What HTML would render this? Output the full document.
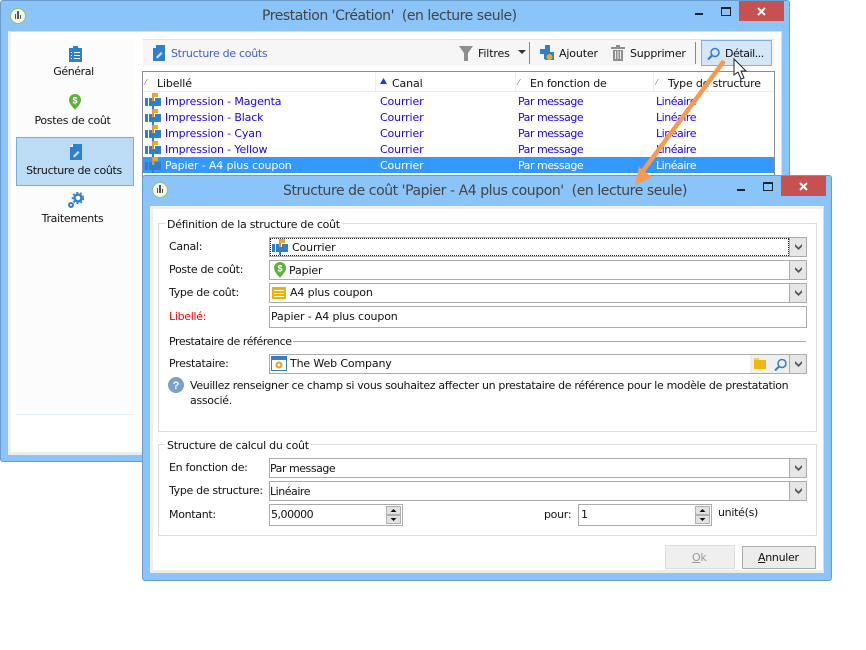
<!DOCTYPE html>
<html><head><meta charset="utf-8">
<style>
html,body{margin:0;padding:0;background:#fff;}
#p{position:relative;width:866px;height:650px;overflow:hidden;background:#fff;font-family:"DejaVu Sans","Liberation Sans",sans-serif;font-size:11px;color:#111;}
#p div,#p svg{position:absolute;}
.t{white-space:nowrap;line-height:16px;margin-top:1px;letter-spacing:-.3px;}
.n{letter-spacing:-.14px;}
.m{letter-spacing:-.47px;}
.win{background:#8ac4f9;border:1px solid #6a9ccb;box-sizing:border-box;border-radius:3px;}
.f{background:#fff;border:1px solid #ababab;box-sizing:border-box;}
.dd{background:#e6e6e6;border:1px solid #ababab;box-sizing:border-box;width:18px;}
.cap{color:#444;font-size:14px;letter-spacing:-.47px;}
.bl{color:#1a00ff;}
.sp{background:#e2e2e2;border:1px solid #b0b0b0;box-sizing:border-box;width:15px;height:9px;}
</style></head><body><div id="p">
<svg width="0" height="0" style="position:absolute"><defs>
<g id="mail"><rect x="0" y="5" width="3" height="8" fill="#2f80c8"/><path d="M4 5h4v3h2V5h6v8H4z" fill="#2f80c8"/><rect x="7" y="0" width="2" height="8" fill="#e8902a"/><rect x="8" y="0" width="5" height="4" fill="#f5a623"/><rect x="7" y="13" width="2" height="3" fill="#2f80c8"/></g>
<g id="doc"><path d="M3 0h9v16H0V3z" fill="#2f80c8"/><path d="M3 0v3H0z" fill="#fff"/><path d="M3 12l5-5 1.500 1.500-5 5z" fill="#cfe4f6"/></g>
<g id="pin"><path d="M6 0a6 6 0 0 1 6 6c0 4-4 7-6 10-2-3-6-6-6-10a6 6 0 0 1 6-6z" fill="#5fb03c"/><text x="6" y="9.500" font-size="9" font-weight="bold" text-anchor="middle" fill="#fff" font-family="Liberation Sans">$</text></g>
<g id="chev"><path d="M1 0l3.500 3.500L8 0v2.500L4.500 6 1 2.500z" fill="#555"/></g>
<g id="logo"><circle cx="8" cy="8" r="7.500" fill="#f4f4ee" stroke="#9cc35a"/><path d="M7 3v8h2V3zM5 6v5h1V6zM10 7v4h1V7z" fill="#555"/></g>
<g id="mag"><circle cx="8" cy="5.500" r="4" fill="none" stroke="#2f80c8" stroke-width="1.500"/><path d="M5 8.500L1 12.500" stroke="#2f80c8" stroke-width="2"/></g>
</defs></svg>

<!-- main window -->
<div class="win" style="left:0;top:0;width:790px;height:462px"></div>
<div style="left:8px;top:31px;width:774px;height:424px;background:#fff;border:1px solid #ddd;box-sizing:border-box;border-bottom:3px solid #ececec;border-left:3px solid #f0f0f0"></div>
<svg style="left:10px;top:8px" width="16" height="16"><use href="#logo"/></svg>
<div class="t cap" style="left:262px;top:7px">Prestation 'Création'&nbsp; (en lecture seule)</div>
<div style="left:695px;top:13px;width:8px;height:2px;background:#222"></div>
<div style="left:721px;top:7px;width:8px;height:6px;border:1px solid #222;border-top-width:2px"></div>
<div style="left:739px;top:1px;width:45px;height:20px;background:#c75050"></div>
<svg style="left:757px;top:7px" width="9" height="9"><path d="M1 1l7 7M8 1L1 8" stroke="#fff" stroke-width="2"/></svg>

<!-- sidebar -->
<div style="left:16px;top:39px;width:118px;height:375px;background:#fcfcfc;border-bottom:1px solid #e6eefb"></div>
<div style="left:16px;top:137px;width:118px;height:49px;background:#bcdcf6;border:1px solid #74ade0;box-sizing:border-box"></div>
<svg style="left:69px;top:45px" width="13" height="17"><path d="M0 3h4V1h5v2h4v14H0z" fill="#2f80c8"/><path d="M5 7.500h6M5 10.500h6M5 13.500h6M2 7.500h1M2 10.500h1M2 13.500h1" stroke="#fff"/></svg>
<div class="t" style="left:16px;top:63px;width:115px;text-align:center;letter-spacing:-.4px">Général</div>
<svg style="left:69px;top:94px" width="12" height="17"><use href="#pin"/></svg>
<div class="t" style="left:16px;top:112px;width:113px;text-align:center">Postes de coût</div>
<svg style="left:70px;top:144px" width="12" height="16"><use href="#doc"/></svg>
<div class="t" style="left:16px;top:162px;width:116px;text-align:center;letter-spacing:-.33px">Structure de coûts</div>
<svg style="left:67px;top:192px" width="17" height="17"><circle cx="11" cy="6" r="3.500" fill="none" stroke="#2f80c8" stroke-width="2.500"/><circle cx="11" cy="6" r="5.500" fill="none" stroke="#2f80c8" stroke-width="1.500" stroke-dasharray="2 2"/><circle cx="4" cy="13" r="2" fill="none" stroke="#2f80c8" stroke-width="2"/></svg>
<div class="t" style="left:16px;top:210px;width:113px;text-align:center">Traitements</div>

<!-- toolbar -->
<div style="left:143px;top:39px;width:632px;height:27px;background:#f6f6f6;border-top:1px solid #e4e4e4;box-sizing:border-box"></div>
<svg style="left:153px;top:45px" width="12" height="16"><use href="#doc"/></svg>
<div class="t" style="left:171px;top:45px;color:#3f5fcc">Structure de coûts</div>
<svg style="left:459px;top:46px" width="15" height="15"><path d="M0 0h14L9 7v8H5V7z" fill="#8e8e8e"/></svg>
<div class="t n" style="left:478px;top:45px">Filtres</div>
<svg style="left:518px;top:50px" width="8" height="5"><path d="M0 0h8L4 4z" fill="#333"/></svg>
<div style="left:529px;top:42px;width:1px;height:22px;background:#888"></div>
<svg style="left:540px;top:45px" width="15" height="16"><path d="M5 0h5v7h4v8H6l-2-1V9H0V4h5z" fill="#2f80c8"/><circle cx="9.500" cy="12" r="3" fill="#f5a623"/></svg>
<div class="t n" style="left:559px;top:45px">Ajouter</div>
<svg style="left:611px;top:45px" width="14" height="16"><path d="M0 2h14v2H0zM5 0h4v2H5zM2 5h10v11H2z" fill="#8e8e8e"/><path d="M4.500 6v8M7 6v8M9.500 6v8" stroke="#eee"/></svg>
<div class="t n" style="left:630px;top:45px;letter-spacing:-.2px">Supprimer</div>
<div style="left:695px;top:42px;width:1px;height:22px;background:#888"></div>
<div style="left:701px;top:40px;width:71px;height:26px;background:#d4e6f8;border:1px solid #7eb0e2;box-sizing:border-box"></div>
<svg style="left:707px;top:47px" width="13" height="14"><use href="#mag"/></svg>
<div class="t" style="left:725px;top:45px;letter-spacing:-.45px">Détail...</div>

<!-- list -->
<div style="left:142px;top:71px;width:633px;height:110px;background:#fff;border:1px solid #8a8a95;box-sizing:border-box"></div>
<div style="left:143px;top:72px;width:631px;height:20px;background:#fff;border-bottom:1px solid #e3effb;box-sizing:border-box"></div>
<div style="left:375px;top:72px;width:1px;height:20px;background:#e3effb"></div>
<div style="left:515px;top:72px;width:1px;height:20px;background:#e3effb"></div>
<div style="left:653px;top:72px;width:1px;height:20px;background:#e3effb"></div>
<div class="t" style="left:145px;top:74px;font-size:8px;color:#777">⁄</div>
<div class="t n" style="left:157px;top:75px">Libellé</div>
<svg style="left:380px;top:78px" width="7" height="6"><path d="M0 6L3.500 0 7 6z" fill="#1a3fd0"/></svg>
<div class="t n" style="left:392px;top:75px">Canal</div>
<div class="t" style="left:518px;top:74px;font-size:8px;color:#777">⁄</div>
<div class="t" style="left:530px;top:75px;letter-spacing:-.2px">En fonction de</div>
<div class="t" style="left:656px;top:74px;font-size:8px;color:#777">⁄</div>
<div class="t" style="left:668px;top:75px;letter-spacing:-.18px">Type de structure</div>

<div style="left:143px;top:157px;width:631px;height:16px;background:#3399ff"></div>
<svg style="left:145px;top:93px" width="17" height="16"><use href="#mail"/></svg>
<svg style="left:145px;top:109px" width="17" height="16"><use href="#mail"/></svg>
<svg style="left:145px;top:125px" width="17" height="16"><use href="#mail"/></svg>
<svg style="left:145px;top:141px" width="17" height="16"><use href="#mail"/></svg>
<svg style="left:145px;top:157px" width="17" height="16"><use href="#mail"/></svg>

<div class="t bl n" style="left:165px;top:93px">Impression - Magenta</div>
<div class="t bl n" style="left:380px;top:93px">Courrier</div><div class="t bl m" style="left:518px;top:93px">Par message</div><div class="t bl m" style="left:656px;top:93px">Linéaire</div>
<div class="t bl n" style="left:165px;top:109px">Impression - Black</div>
<div class="t bl n" style="left:380px;top:109px">Courrier</div><div class="t bl m" style="left:518px;top:109px">Par message</div><div class="t bl m" style="left:656px;top:109px">Linéaire</div>
<div class="t bl n" style="left:165px;top:125px">Impression - Cyan</div>
<div class="t bl n" style="left:380px;top:125px">Courrier</div><div class="t bl m" style="left:518px;top:125px">Par message</div><div class="t bl m" style="left:656px;top:125px">Linéaire</div>
<div class="t bl n" style="left:165px;top:141px">Impression - Yellow</div>
<div class="t bl n" style="left:380px;top:141px">Courrier</div><div class="t bl m" style="left:518px;top:141px">Par message</div><div class="t bl m" style="left:656px;top:141px">Linéaire</div>
<div class="t n" style="left:165px;top:157px;color:#fff">Papier - A4 plus coupon</div>
<div class="t n" style="left:380px;top:157px;color:#fff">Courrier</div><div class="t m" style="left:518px;top:157px;color:#fff">Par message</div><div class="t m" style="left:656px;top:157px;color:#fff">Linéaire</div>

<!-- dialog -->
<div class="win" style="left:142px;top:175px;width:690px;height:406px"></div>
<div style="left:150px;top:206px;width:674px;height:367px;background:#fff;border:1px solid #ddd;border-left:3px solid #f0f0f0;border-top:3px solid #f0f0f0;border-bottom:3px solid #ececec;box-sizing:border-box"></div>
<svg style="left:152px;top:182px" width="16" height="16"><use href="#logo"/></svg>
<div class="t cap" style="left:283px;top:182px;letter-spacing:-.44px">Structure de coût 'Papier - A4 plus coupon'&nbsp; (en lecture seule)</div>
<div style="left:737px;top:189px;width:8px;height:2px;background:#222"></div>
<div style="left:763px;top:182px;width:8px;height:6px;border:1px solid #222;border-top-width:2px"></div>
<div style="left:781px;top:176px;width:45px;height:20px;background:#c75050"></div>
<svg style="left:799px;top:182px" width="9" height="9"><path d="M1 1l7 7M8 1L1 8" stroke="#fff" stroke-width="2"/></svg>

<!-- group 1 -->
<div style="left:158px;top:223px;width:659px;height:209px;border:1px solid #ddd;box-sizing:border-box"></div>
<div class="t" style="left:165px;top:216px;background:#fff;padding:0 2px;letter-spacing:-.27px">Définition de la structure de coût</div>
<div class="t" style="left:169px;top:238px">Canal:</div>
<div class="t" style="left:169px;top:261px">Poste de coût:</div>
<div class="t" style="left:169px;top:284px">Type de coût:</div>
<div class="t" style="left:169px;top:308px;color:#f00">Libellé:</div>

<div class="f" style="left:269px;top:237px;width:538px;height:20px"></div>
<div style="left:270px;top:238px;width:519px;height:18px;border:1px dotted #222;box-sizing:border-box"></div>
<div class="dd" style="left:789px;top:237px;height:20px"></div><svg style="left:794px;top:244px" width="9" height="7"><use href="#chev"/></svg>
<svg style="left:272px;top:239px" width="17" height="16"><use href="#mail"/></svg>
<div class="t n" style="left:292px;top:239px">Courrier</div>

<div class="f" style="left:269px;top:260px;width:538px;height:20px"></div>
<div class="dd" style="left:789px;top:260px;height:20px"></div><svg style="left:794px;top:267px" width="9" height="7"><use href="#chev"/></svg>
<svg style="left:274px;top:262px" width="12" height="16"><use href="#pin"/></svg>
<div class="t n" style="left:289px;top:262px">Papier</div>

<div class="f" style="left:269px;top:283px;width:538px;height:20px"></div>
<div class="dd" style="left:789px;top:283px;height:20px"></div><svg style="left:794px;top:290px" width="9" height="7"><use href="#chev"/></svg>
<svg style="left:272px;top:287px" width="14" height="12"><rect width="14" height="12" fill="#e8b010"/><path d="M2 3.500h10M2 6.500h10M2 9.500h10" stroke="#fff3c8"/></svg>
<div class="t n" style="left:290px;top:284px">A4 plus coupon</div>

<div class="f" style="left:269px;top:306px;width:538px;height:22px"></div>
<div class="t n" style="left:271px;top:308px">Papier - A4 plus coupon</div>

<div class="t" style="left:169px;top:333px;letter-spacing:-.42px">Prestataire de référence</div>
<div style="left:293px;top:341px;width:513px;height:1px;background:#a8a8a8"></div>

<div class="t" style="left:169px;top:355px">Prestataire:</div>
<div class="f" style="left:269px;top:354px;width:538px;height:20px"></div>
<div style="left:750px;top:355px;width:39px;height:18px;background:#efefef"></div>
<div class="dd" style="left:789px;top:354px;height:20px"></div><svg style="left:794px;top:361px" width="9" height="7"><use href="#chev"/></svg>
<svg style="left:271px;top:356px" width="16" height="15"><rect x=".5" y=".5" width="15" height="14" fill="#fff" stroke="#2f80c8"/><rect x="1" y="1" width="14" height="3" fill="#2f80c8"/><circle cx="8" cy="9" r="2.500" fill="none" stroke="#f09a20" stroke-width="2"/></svg>
<div class="t n" style="left:290px;top:355px">The Web Company</div>
<svg style="left:754px;top:358px" width="12" height="11"><path d="M0 0h5v2h7v9H0z" fill="#efb810"/><path d="M0 0h5v2H0z" fill="#f5d060"/></svg>
<svg style="left:774px;top:358px" width="13" height="13"><use href="#mag"/></svg>

<svg style="left:168px;top:377px" width="16" height="16"><circle cx="8" cy="8" r="8" fill="#7b9fcf"/><text x="8" y="12" font-size="11" font-weight="bold" text-anchor="middle" fill="#fff" font-family="Liberation Sans">?</text></svg>
<div class="t" style="left:190px;top:377px;letter-spacing:-.32px">Veuillez renseigner ce champ si vous souhaitez affecter un prestataire de référence pour le modèle de prestatation</div>
<div class="t" style="left:190px;top:392px">associé.</div>

<!-- group 2 -->
<div style="left:158px;top:444px;width:659px;height:92px;border:1px solid #ddd;box-sizing:border-box"></div>
<div class="t" style="left:165px;top:437px;background:#fff;padding:0 2px;letter-spacing:-.26px">Structure de calcul du coût</div>
<div class="t" style="left:169px;top:459px">En fonction de:</div>
<div class="t" style="left:169px;top:482px;letter-spacing:-.33px">Type de structure:</div>
<div class="t" style="left:169px;top:506px">Montant:</div>

<div class="f" style="left:269px;top:458px;width:538px;height:20px"></div>
<div class="dd" style="left:789px;top:458px;height:20px"></div><svg style="left:794px;top:465px" width="9" height="7"><use href="#chev"/></svg>
<div class="t m" style="left:270px;top:460px">Par message</div>
<div class="f" style="left:269px;top:481px;width:538px;height:20px"></div>
<div class="dd" style="left:789px;top:481px;height:20px"></div><svg style="left:794px;top:488px" width="9" height="7"><use href="#chev"/></svg>
<div class="t m" style="left:270px;top:483px">Linéaire</div>

<div class="f" style="left:269px;top:504px;width:134px;height:22px"></div>
<div class="t m" style="left:271px;top:506px">5,00000</div>
<div class="sp" style="left:386px;top:506px"></div><div class="sp" style="left:386px;top:515px"></div>
<svg style="left:386px;top:506px" width="15" height="18"><path d="M4.500 6l3-3 3 3zM4.500 12l3 3 3-3z" fill="#111"/></svg>

<div class="t" style="left:544px;top:506px">pour:</div>
<div class="f" style="left:578px;top:504px;width:134px;height:22px"></div>
<div class="t" style="left:581px;top:506px">1</div>
<div class="sp" style="left:695px;top:506px"></div><div class="sp" style="left:695px;top:515px"></div>
<svg style="left:695px;top:506px" width="15" height="18"><path d="M4.500 6l3-3 3 3zM4.500 12l3 3 3-3z" fill="#111"/></svg>
<div class="t" style="left:718px;top:504px">unité(s)</div>

<div style="left:665px;top:545px;width:70px;height:24px;background:#efefef;border:1px solid #dcdcdc;box-sizing:border-box"></div>
<div class="t" style="left:692px;top:549px;color:#9a9a9a"><u>O</u>k</div>
<div style="left:742px;top:546px;width:74px;height:23px;background:#ececec;border:1px solid #acacac;box-sizing:border-box"></div>
<div class="t" style="left:758px;top:549px"><u>A</u>nnuler</div>

<!-- cursor + arrow -->
<svg style="left:0;top:0" width="866" height="650">
<path d="M734 59v16l4-3 3 7 3-1-3-7h5z" fill="#fff" stroke="#222" stroke-width="1"/>
<path d="M724 61L640 175" stroke="#f79a50" stroke-width="4.500" fill="none"/>
<path d="M635 185l4-18 13 10z" fill="#f79a50"/>
</svg>
</div></body></html>
